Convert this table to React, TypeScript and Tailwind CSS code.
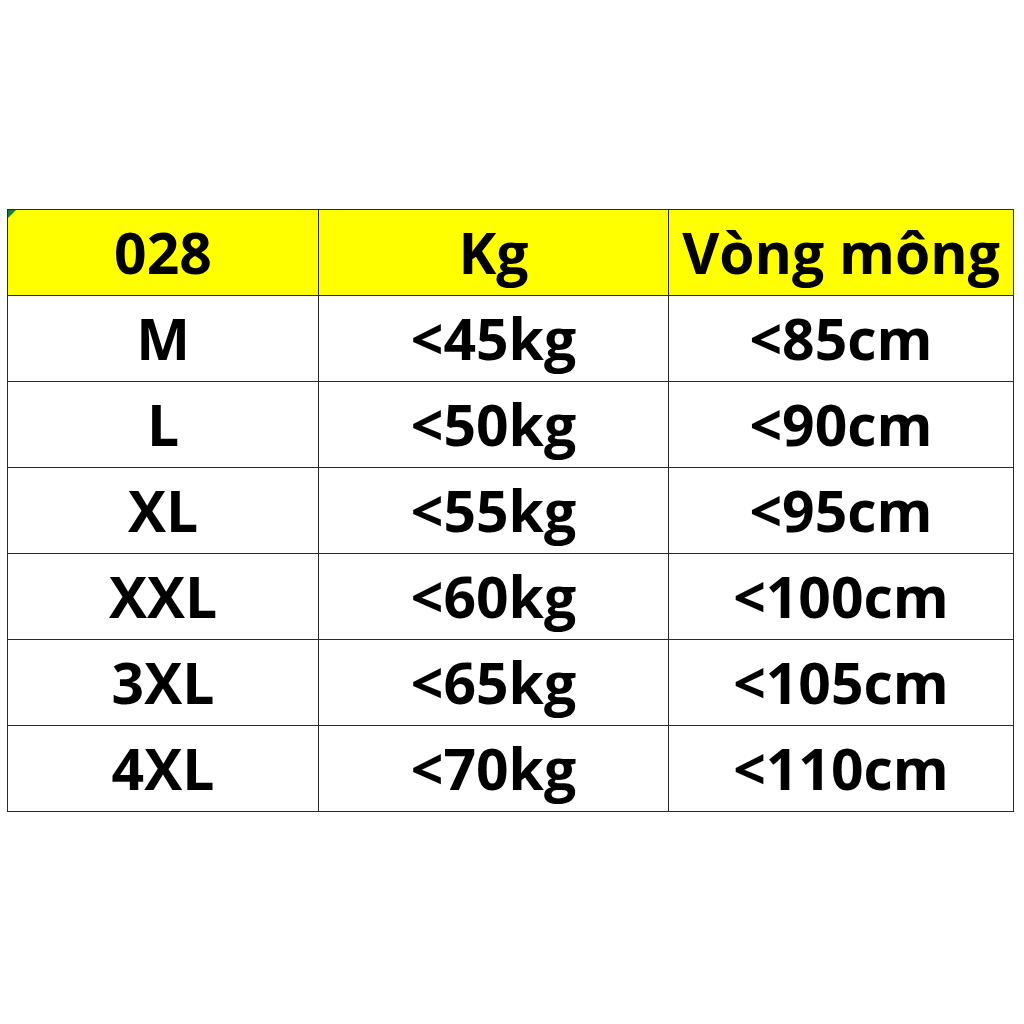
const ROWS = [
  ["M", "<45kg", "<85cm"],
  ["L", "<50kg", "<90cm"],
  ["XL", "<55kg", "<95cm"],
  ["XXL", "<60kg", "<100cm"],
  ["3XL", "<65kg", "<105cm"],
  ["4XL", "<70kg", "<110cm"],
];

export default function App() {
  return (
    <div className="w-[1024px] h-[1024px] bg-white pt-[209px] pl-[7px] font-['Open_Sans',sans-serif]">
      <table className="border-collapse text-black font-bold text-[57px] leading-none">
        <colgroup>
          <col className="w-[311px]" />
          <col className="w-[350px]" />
          <col className="w-[345px]" />
        </colgroup>
        <thead>
          <tr className="h-[86px] bg-[#ffff00]">
            <th className="relative border border-[#2a2a2a] text-center font-bold">
              <span className="absolute left-0 top-0 w-0 h-0 border-t-[8px] border-r-[8px] border-t-[#1e7b34] border-r-transparent" />
              028
            </th>
            <th className="border border-[#2a2a2a] text-center font-bold">Kg</th>
            <th className="border border-[#2a2a2a] text-center font-bold">Vòng mông</th>
          </tr>
        </thead>
        <tbody>
          {ROWS.map((row, i) => (
            <tr key={i} className="h-[86px]">
              {row.map((cell, j) => (
                <td key={j} className="border border-[#2a2a2a] text-center">
                  {cell}
                </td>
              ))}
            </tr>
          ))}
        </tbody>
      </table>
    </div>
  );
}
